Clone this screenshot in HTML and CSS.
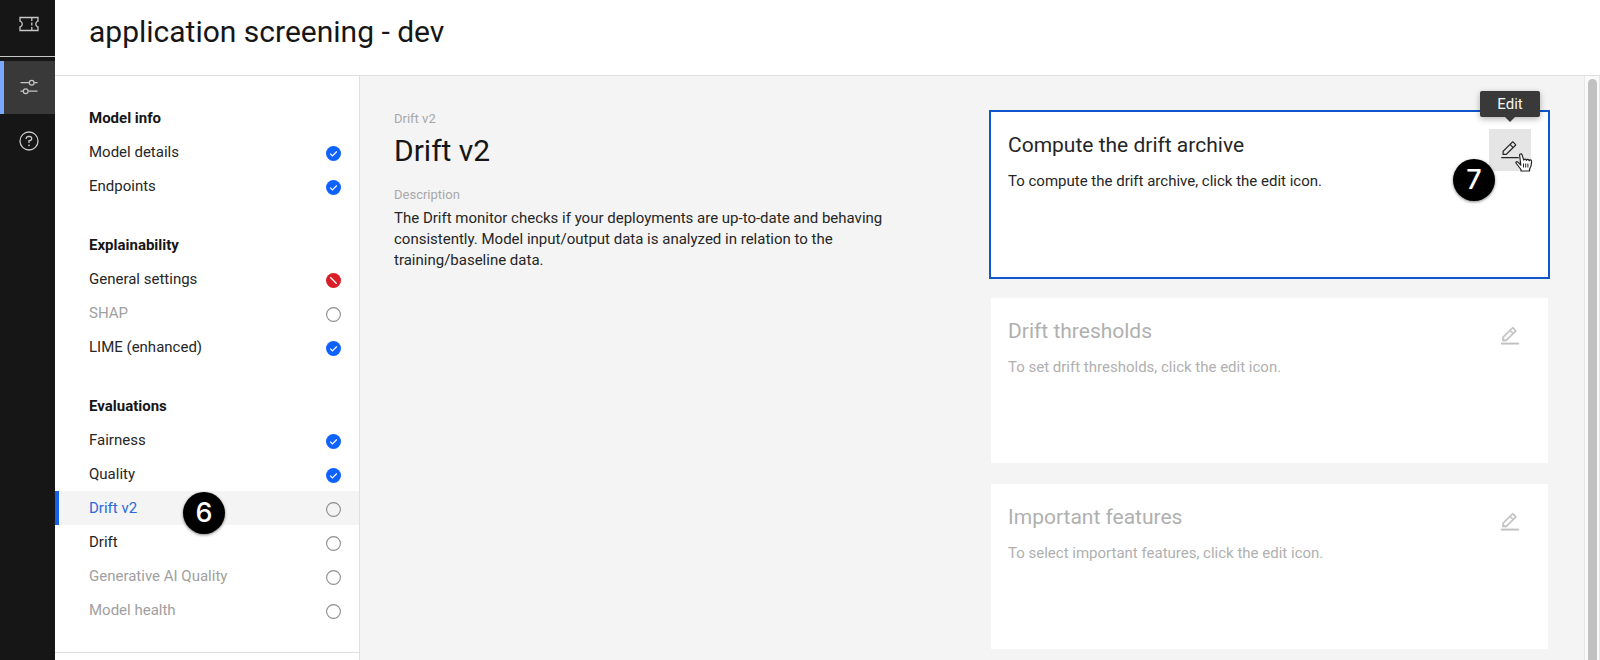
FILE: index.html
```html
<!DOCTYPE html>
<html lang="en">
<head>
<meta charset="utf-8">
<title>application screening - dev</title>
<link rel="stylesheet" href="styles.css">
</head>
<body>
<svg class="defs" aria-hidden="true">
  <symbol id="check" viewBox="0 0 15 15"><circle cx="7.5" cy="7.5" r="7.5" fill="#0f62fe"/><path d="M4.2 7.7l2.2 2.2 4.4-4.4" fill="none" stroke="#fff" stroke-width="1.2"/></symbol>
  <symbol id="empty" viewBox="0 0 15 15"><circle cx="7.5" cy="7.5" r="6.9" fill="none" stroke="#8d8d8d" stroke-width="1.1"/></symbol>
  <symbol id="error" viewBox="0 0 15 15"><circle cx="7.5" cy="7.5" r="7.5" fill="#da1e28"/><path d="M4.3 4.3l6.4 6.4" stroke="#fff" stroke-width="1.3"/></symbol>
  <symbol id="edit" viewBox="0 0 32 32"><path fill="currentColor" d="M2 27H30V29H2zM25.4 9c.8-.8.8-2 0-2.8l-3.6-3.6c-.8-.8-2-.8-2.8 0l-15 15V24h6.4L25.4 9zM20.4 4L24 7.6l-3 3L17.4 7 20.4 4zM6 22v-3.6l10-10 3.6 3.6-10 10H6z"/></symbol>
</svg>
<div class="app">
  <nav class="rail" aria-label="Main">
    <a class="rail-item rail-first" href="#" aria-label="Tickets"><svg width="20" height="16" viewBox="0 0 20 16" fill="none" stroke="currentColor" stroke-width="1.3"><path d="M1 1.500h18v3.700h-.6a3.200 3.200 0 0 0 0 5.600h.6v3.700H1v-3.700h.6a3.200 3.200 0 0 0 0-5.600H1z"/><path d="M12.800 2v3M12.800 6.500v3M12.800 11v3"/></svg></a>
    <a class="rail-item rail-active" href="#" aria-label="Configure" aria-current="page"><svg width="18" height="16" viewBox="0 0 18 16" fill="none" stroke="currentColor" stroke-width="1.2"><path d="M.5 3.700h8.700M14.200 3.700h3.300M.5 12.200h2.700M8.200 12.200h9.300"/><circle cx="11.700" cy="3.700" r="2.400"/><circle cx="5.700" cy="12.200" r="2.400"/></svg></a>
    <a class="rail-item" href="#" aria-label="Help"><svg width="20" height="20" viewBox="0 0 20 20" fill="none" stroke="currentColor" stroke-width="1.3"><circle cx="10" cy="10" r="9"/><path d="M7.200 8V7.400A2 2 0 0 1 9.200 5.500h1.400a2.100 2.100 0 0 1 0 4.200H10v2.300"/><circle cx="10" cy="14.300" r=".9" fill="currentColor" stroke="none"/></svg></a>
  </nav>
  <div class="page">
    <header class="header"><h1 class="title">application screening - dev</h1></header>
    <div class="body">
      <aside class="sidebar">
        <section class="group">
          <h2 class="group-title">Model info</h2>
          <a class="item" href="#">Model details<svg class="status"><use href="#check"/></svg></a>
          <a class="item" href="#">Endpoints<svg class="status"><use href="#check"/></svg></a>
        </section>
        <section class="group">
          <h2 class="group-title">Explainability</h2>
          <a class="item" href="#">General settings<svg class="status"><use href="#error"/></svg></a>
          <a class="item item-off" href="#">SHAP<svg class="status"><use href="#empty"/></svg></a>
          <a class="item" href="#">LIME (enhanced)<svg class="status"><use href="#check"/></svg></a>
        </section>
        <section class="group">
          <h2 class="group-title">Evaluations</h2>
          <a class="item" href="#">Fairness<svg class="status"><use href="#check"/></svg></a>
          <a class="item" href="#">Quality<svg class="status"><use href="#check"/></svg></a>
          <a class="item item-active" href="#" aria-current="true">Drift v2<span class="step step-six">6</span><svg class="status"><use href="#empty"/></svg></a>
          <a class="item" href="#">Drift<svg class="status"><use href="#empty"/></svg></a>
          <a class="item item-off" href="#">Generative AI Quality<svg class="status"><use href="#empty"/></svg></a>
          <a class="item item-off" href="#">Model health<svg class="status"><use href="#empty"/></svg></a>
        </section>
      </aside>
      <main class="content">
        <section class="about">
          <p class="label">Drift v2</p>
          <h2 class="heading">Drift v2</h2>
          <p class="label">Description</p>
          <p class="text">The Drift monitor checks if your deployments are up-to-date and behaving consistently. Model input/output data is analyzed in relation to the training/baseline data.</p>
        </section>
        <div class="cards">
          <section class="card card-active">
            <div class="card-text"><h3 class="card-title">Compute the drift archive</h3><p class="text">To compute the drift archive, click the edit icon.</p></div>
            <button class="edit" type="button" aria-label="Edit" aria-describedby="tip"><svg class="pen"><use href="#edit"/></svg></button>
            <span class="tooltip" id="tip" role="tooltip">Edit</span>
            <svg class="pointer" width="18" height="19" viewBox="0 0 18 19"><path d="M5.800 12.200L3 9.200C1.500 7.800.3 9.200 1.300 10.500L6 16.500V18h8.500v-1.800c1.600-2 2.200-4.500 2-8-.1-1.600-2.100-1.700-2.400-.4-.2-1.700-2.400-1.800-2.700-.4-.3-1.600-2.400-1.600-2.700-.2L7.100 1.800C6.500.3 4.200.8 4.700 2.700z" fill="#fff" stroke="#222" stroke-width="1.200" stroke-linejoin="round"/><path d="M8.500 10.500v4M10.700 10.500v4M12.900 10.500v4" stroke="#222"/></svg>
            <span class="step step-seven">7</span>
          </section>
          <section class="card card-off">
            <div class="card-text"><h3 class="card-title">Drift thresholds</h3><p class="text">To set drift thresholds, click the edit icon.</p></div>
            <button class="edit" type="button" aria-label="Edit drift thresholds" disabled><svg class="pen"><use href="#edit"/></svg></button>
          </section>
          <section class="card card-off">
            <div class="card-text"><h3 class="card-title">Important features</h3><p class="text">To select important features, click the edit icon.</p></div>
            <button class="edit" type="button" aria-label="Edit important features" disabled><svg class="pen"><use href="#edit"/></svg></button>
          </section>
        </div>
      </main>
      <div class="scroll"><div class="thumb"></div></div>
    </div>
  </div>
</div>
</body>
</html>
```
FILE: styles.css
```css
* { box-sizing: border-box; }
body, h1, h2, h3, p { margin: 0; }
body {
  font-family: Roboto, "Liberation Sans", sans-serif;
  font-size: 15px;
  line-height: 21px;
  color: #262626;
  background: #fff;
}
a { color: inherit; text-decoration: none; }
.defs { position: absolute; width: 0; height: 0; }
.app { display: flex; height: 100vh; overflow: hidden; }

.rail { flex: none; width: 55px; background: #161616; color: #c6c6c6; }
.rail-item { display: flex; align-items: center; justify-content: center; height: 53px; padding-left: 2px; }
.rail-first { height: 57px; padding-bottom: 8px; border-bottom: 1px solid #c6c6c6; margin-bottom: 4px; }
.rail-active { padding-bottom: 1px; background: #393939; box-shadow: inset 4px 0 #78a9ff; }

.page { flex: 1; min-width: 0; display: flex; flex-direction: column; }
.header { flex: none; padding: 12px 34px 23px; border-bottom: 1px solid #e0e0e0; }
.title { font-size: 30px; line-height: 40px; font-weight: 400; color: #161616; }
.body { flex: 1; min-height: 0; display: flex; }

.sidebar { flex: none; width: 305px; padding-top: 25px; border-right: 1px solid #e0e0e0; overflow: hidden; }
.group { padding-bottom: 25px; }
.group:last-child { border-bottom: 1px solid #e0e0e0; }
.group-title { padding-left: 34px; font-size: 15px; line-height: 34px; font-weight: 700; color: #161616; }
.item { display: flex; align-items: center; height: 34px; padding: 0 18px 0 34px; }
.item-off { color: #a0a0a0; }
.item-active { position: relative; background: #f4f4f4; color: #2b68dc; box-shadow: inset 4px 0 #1461ee; }
.status { width: 15px; height: 15px; margin-left: auto; margin-top: 3px; }

.content { flex: 1; min-width: 0; display: grid; grid-template-columns: 1fr 1fr; gap: 40px; padding: 36px 36px 0 34px; background: #f4f4f4; }
.about { padding-right: 40px; }
.label { font-size: 13px; line-height: 14px; color: #a8a8a8; }
.heading { margin: 5px 0 17px; font-size: 30px; line-height: 40px; font-weight: 400; color: #161616; }
.label + .text { margin-top: 6px; }

.cards { display: flex; flex-direction: column; gap: 21px; }
.card { position: relative; flex: none; display: flex; justify-content: space-between; min-height: 165px; padding: 17px; background: #fff; }
.card-active { outline: 2px solid #0f55cc; }
.card-off { color: #b0b0b0; }
.card-title { margin: 2px 0 12px; font-size: 21px; line-height: 28px; font-weight: 400; }
.edit { display: flex; align-items: center; justify-content: center; width: 42px; height: 42px; padding: 0; border: 0; background: none; color: #262626; }
.edit:disabled { color: #c0c0c0; }
.edit:disabled .pen { stroke: currentColor; stroke-width: 1; }
.card-active .edit { background: #e5e5e5; }
.pen { width: 20px; height: 20px; }

.tooltip { position: absolute; top: -21px; right: 8px; width: 60px; border-radius: 2px; background: #393939; color: #f4f4f4; line-height: 26px; text-align: center; box-shadow: 0 2px 6px rgba(0, 0, 0, .3); }
.tooltip::after { content: ""; position: absolute; top: 100%; left: 25px; border: 5px solid transparent; border-top-color: #393939; border-bottom: 0; }
.pointer { position: absolute; top: 41px; right: 15px; }
.step { position: absolute; width: 42px; height: 42px; border-radius: 50%; background: #000; color: #fff; font: 500 27px/42px Inter, "Liberation Sans", sans-serif; text-align: center; box-shadow: 0 1px 3px rgba(0, 0, 0, .5); }
.step-six { left: 128px; top: 1px; z-index: 1; }
.step-seven { right: 53px; top: 47px; }

.scroll { flex: none; width: 16px; padding: 3px 2px 0 3px; border: 1px solid #e6e6e6; border-width: 0 1px; background: #fafafa; }
.thumb { height: 100%; border-radius: 5px 5px 0 0; background: #c1c1c1; }
```
